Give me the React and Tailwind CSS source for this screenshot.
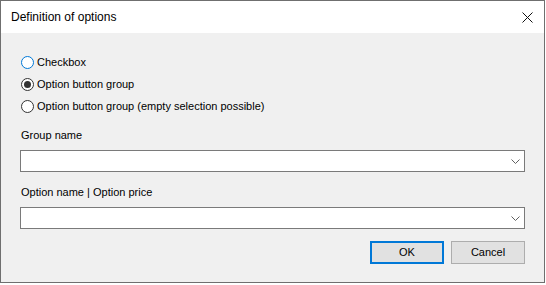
import React, { useState } from 'react';

function Radio({ checked, focused, label, onClick }) {
  return (
    <div className="flex h-[22px] items-center cursor-default" onClick={onClick}>
      <div
        className={`ml-[1px] flex h-[13px] w-[13px] items-center justify-center rounded-full border bg-white ${
          focused ? 'border-[#0078d7]' : 'border-[#333333]'
        }`}
      >
        {checked && <div className="h-[7px] w-[7px] rounded-full bg-[#333333]" />}
      </div>
      <span className="ml-[3px] text-[11px] leading-[13px] text-black">{label}</span>
    </div>
  );
}

function Combo() {
  return (
    <div className="flex h-[22px] w-full items-center justify-end border border-[#7a7a7a] bg-white pr-[4px]">
      <svg width="9" height="5" viewBox="0 0 9 5" className="mr-[0px]">
        <polyline points="0.5,0.5 4.5,4.5 8.5,0.5" fill="none" stroke="#606060" strokeWidth="1" />
      </svg>
    </div>
  );
}

export default function App() {
  const [kind, setKind] = useState(1);

  return (
    <div className="h-[285px] w-[546px] bg-white" style={{ fontFamily: '"Liberation Sans", Arial, sans-serif' }}>
      <div className="flex h-[283px] w-[545px] flex-col border border-[#6f6f6f]">
        {/* title bar */}
        <div className="flex h-[32px] shrink-0 items-center justify-between bg-white pl-[10px] pr-[10px]">
          <span className="text-[12px] leading-[14px] text-black">Definition of options</span>
          <svg width="11" height="11" viewBox="0 0 11 11" className="mr-[1px]">
            <path d="M0.5 0.5 L10.5 10.5 M10.5 0.5 L0.5 10.5" stroke="#111111" strokeWidth="1" />
          </svg>
        </div>

        {/* body */}
        <div className="flex flex-1 flex-col bg-[#f0f0f0] px-[19px] pt-[18px]">
          <div className="flex flex-col">
            <Radio label="Checkbox" checked={kind === 0} focused onClick={() => setKind(0)} />
            <Radio label="Option button group" checked={kind === 1} onClick={() => setKind(1)} />
            <Radio
              label="Option button group (empty selection possible)"
              checked={kind === 2}
              onClick={() => setKind(2)}
            />
          </div>

          <div className="mt-[11px] ml-[1px] text-[11px] leading-[14px] text-black">Group name</div>
          <div className="mt-[8px]">
            <Combo />
          </div>

          <div className="mt-[13px] ml-[1px] text-[11px] leading-[14px] text-black">Option name | Option price</div>
          <div className="mt-[8px]">
            <Combo />
          </div>

          <div className="mt-[12px] flex justify-end gap-[7px]">
            <button className="h-[23px] w-[74px] border-2 border-[#0078d7] bg-[#e1e1e1] text-[11px] text-black">
              OK
            </button>
            <button className="h-[23px] w-[74px] border border-[#adadad] bg-[#e1e1e1] text-[11px] text-black">
              Cancel
            </button>
          </div>
        </div>
      </div>
    </div>
  );
}
